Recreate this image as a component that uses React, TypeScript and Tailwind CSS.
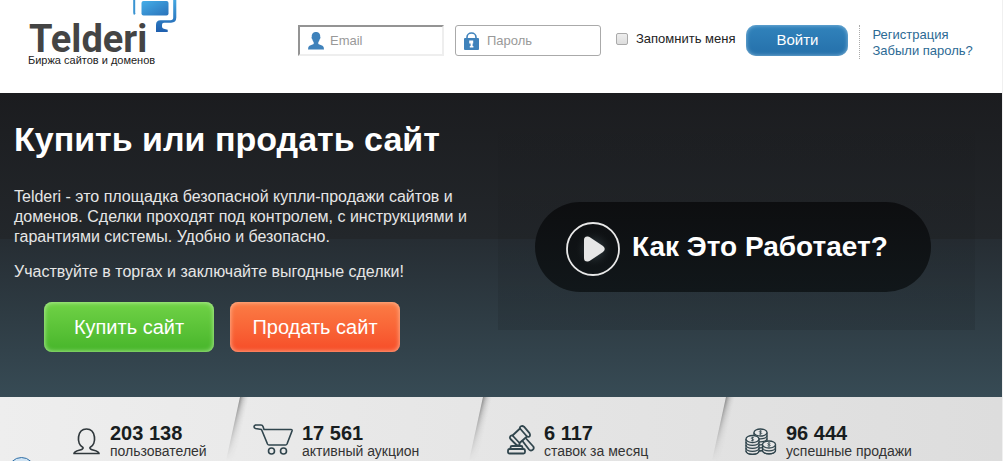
import type { ReactNode } from "react";

function LogoMark() {
  return (
    <svg width="46" height="34" viewBox="0 0 46 34" aria-hidden="true">
      <defs>
        <linearGradient id="screen" x1="0" y1="0" x2="1" y2="1">
          <stop offset="0" stopColor="#45aee8" />
          <stop offset="1" stopColor="#2a72ba" />
        </linearGradient>
        <linearGradient id="frame" gradientUnits="userSpaceOnUse" x1="0" y1="0" x2="0" y2="32">
          <stop offset="0" stopColor="#43a6e0" />
          <stop offset="1" stopColor="#1f5fae" />
        </linearGradient>
      </defs>
      <path d="M2.200 0v12.500q0 1 .6 1.800" fill="none" stroke="#3a94d2" strokeWidth="2" />
      <rect x="9.500" y="1" width="27" height="14.500" rx="2" fill="url(#screen)" />
      <path d="M41.200 0h3.100v17.500q0 5.200-5.300 5.200h-7q-2 0-2 2v1.800q0 1.800 1.800 2.300l3.900.9v2.200H24v-7q0-4.600 4.600-4.600h9.900q2.700 0 2.700-2.800z" fill="url(#frame)" />
    </svg>
  );
}

function UserGlyph() {
  return (
    <svg width="16" height="18" viewBox="0 0 16 18" fill="#3f82bb" aria-hidden="true" className="shrink-0">
      <path d="M8 0C4.800 0 3.600 2.200 3.800 4.800 3.200 5.200 3.700 7 4.300 7.300 4.600 8.900 5.300 9.700 5.700 10.200V12L1.500 13.800Q0 14.500 0 17.500H16Q16 14.500 14.500 13.800L10.300 12V10.200C10.700 9.700 11.400 8.900 11.700 7.300 12.300 7 12.800 5.200 12.200 4.800 12.400 2.200 11.200 0 8 0z" />
    </svg>
  );
}

function LockGlyph() {
  return (
    <svg width="15" height="18" viewBox="0 0 15 18" aria-hidden="true" className="shrink-0">
      <path d="M3 7V5.200a4.500 4.200 0 0 1 9 0V7" fill="none" stroke="#3f82bb" strokeWidth="1.600" />
      <rect y="6" width="15" height="12" rx="1" fill="#3f82bb" />
      <path d="M5.200 8.500h4v3h-.6V14h.8v1.500H5.800V14h.8v-2.500H5.200z" fill="#fff" />
    </svg>
  );
}

function PersonIcon() {
  return (
    <svg width="27" height="27" viewBox="0 0 27 27" fill="none" stroke="#30383c" strokeWidth="1.700" aria-hidden="true">
      <path d="M10 19.500C3 16 4 1 13.500 1S24 16 17 19.500c-1 3.500 8.500 2 9 6H1C1.500 21.500 11 23 10 19.500z" strokeLinejoin="round" />
    </svg>
  );
}

function CartIcon() {
  return (
    <svg width="41" height="31" viewBox="0 0 41 31" fill="none" stroke="#30454d" strokeWidth="1.600" strokeLinejoin="round" aria-hidden="true">
      <path d="M11 5.500h27q1.500 0 1 1.500l-5 13q-.5 1-1.500 1H16q-1 0-1.500-1L8.500 5.500 2.500 4.500Q1 4 1 2.800T2.500 1H8q1.500 0 2 1.500L11 5.500z" />
      <circle cx="18.500" cy="27" r="3" />
      <circle cx="30.500" cy="27" r="3" />
    </svg>
  );
}

function GavelIcon() {
  return (
    <svg width="28" height="30" viewBox="0 0 28 30" fill="none" stroke="#30454d" strokeWidth="1.800" strokeLinejoin="round" strokeLinecap="round" aria-hidden="true">
      <path d="M5.500 10.500 13 3.500l7 8-7.500 6.500z" />
      <path d="M13 3.500q-.5-1.500 1-2.200t3 .4l5.500 6.500q1 1.800.2 3t-2.700.3" />
      <path d="M5.500 10.500Q4 10 3.200 11.500T3.500 14l5.500 5.500q1.500 1.500 2.800.8t.7-2.300" />
      <path d="m15.500 16 6.500 8.500q1.500 1.800 3.500.5t.8-3.500L19.500 14" />
      <path d="M3.500 24v-1.500Q3.500 21 5 21h9q1.500 0 1.500 1.500V24M2.500 24h14q1.500 0 1.500 2v1q0 1.500-1.500 1.500h-14Q1 28.500 1 27v-1q0-2 1.500-2z" />
    </svg>
  );
}

function CoinStack({ x, y, layers }: { x: number; y: number; layers: number }) {
  const h = layers * 3;
  return (
    <g transform={`translate(${x} ${y})`}>
      <path d={`M-6.500 0V${h}A6.500 3.300 0 0 0 6.500 ${h}V0`} fill="#e0e0e0" />
      {Array.from({ length: layers }, (_, i) => (
        <path key={i} d={`M-6.500 ${(i + 1) * 3}a6.500 3.300 0 0 0 13 0`} />
      ))}
      <ellipse rx="6.500" ry="3.500" fill="#e8e8e8" />
      <path d="M1.400-1.200C.5-2-1.500-1.700-1.300-.7S1.500 0 1.300.9-.8 1.900-1.500 1.200M0-2.200V2.200" strokeWidth=".8" />
    </g>
  );
}

function CoinsIcon() {
  return (
    <svg width="32" height="27" viewBox="0 0 32 27" fill="none" stroke="#30454d" strokeWidth="1.300" aria-hidden="true">
      <CoinStack x={15.5} y={4.500} layers={5} />
      <CoinStack x={7.5} y={11} layers={4} />
      <CoinStack x={24} y={16.500} layers={2} />
    </svg>
  );
}

function PlayIcon() {
  return (
    <svg width="54" height="54" viewBox="0 0 54 54" aria-hidden="true" className="mt-1 shrink-0">
      <defs>
        <radialGradient id="glow">
          <stop offset="0" stopColor="#44535a" />
          <stop offset="1" stopColor="#0d0f10" stopOpacity="0" />
        </radialGradient>
      </defs>
      <circle cx="28" cy="27" r="20" fill="url(#glow)" />
      <circle cx="27" cy="27" r="26" fill="none" stroke="#e8e8e8" strokeWidth="1.800" />
      <path d="M18 18q0-4 4-3.500 1.500.2 3 1.500l12 8q3.500 3 0 6l-12 8q-1.500 1.200-3 1.500-4 .5-4-3.500z" fill="#e6e6e6" />
    </svg>
  );
}

function Stat({ icon, value, label, pad }: { icon: ReactNode; value: string; label: string; pad: string }) {
  return (
    <div className={`flex items-start pt-6 ${pad}`}>
      <div className="flex h-[34px] items-end">{icon}</div>
      <div>
        <div className="text-xl leading-6 font-bold text-[#181d20]">{value}</div>
        <div className="text-sm leading-3 whitespace-nowrap text-[#333]">{label}</div>
      </div>
    </div>
  );
}

function Divider() {
  return (
    <svg width="24" height="64" viewBox="0 0 24 64" aria-hidden="true" className="absolute top-0 -right-2">
      <defs>
        <linearGradient id="fold" gradientUnits="userSpaceOnUse" x1="7" y1="30" x2="16" y2="32">
          <stop offset="0" stopColor="#777" stopOpacity=".9" />
          <stop offset="0.400" stopColor="#999" stopOpacity=".45" />
          <stop offset="1" stopColor="#ccc" stopOpacity="0" />
        </linearGradient>
        <linearGradient id="foldFade" x1="0" y1="0" x2="0" y2="1">
          <stop offset="0" stopColor="#fff" />
          <stop offset="1" stopColor="#000" />
        </linearGradient>
        <mask id="foldMask">
          <rect width="24" height="64" fill="url(#foldFade)" />
        </mask>
      </defs>
      <path d="M14 0h10L10 64H0z" fill="url(#fold)" mask="url(#foldMask)" />
    </svg>
  );
}

export default function App() {
  return (
    <div className="flex min-h-screen flex-col overflow-hidden border-r border-[#f0f0f0] bg-white font-['Liberation_Sans',Arial,sans-serif]">
      <header className="flex h-[93px] items-start">
        <a href="#home" className="relative block w-[298px] shrink-0 pt-6 pl-7">
          <span className="block pl-px font-[Roboto,sans-serif] text-[38px] leading-[30px] font-bold text-[#444]">Telderi</span>
          <span className="absolute top-0 left-[132px]">
            <LogoMark />
          </span>
          <span className="block text-[11px] leading-3 text-[#222]">Биржа сайтов и доменов</span>
        </a>
        <form className="flex items-start pt-[25px]" onSubmit={(e) => e.preventDefault()}>
          <label className="flex h-[31px] w-[146px] items-center gap-1.5 border-2 border-t-[#949494] border-r-[#eee] border-b-[#eee] border-l-[#949494] pl-2">
            <UserGlyph />
            <input type="email" aria-label="Email" placeholder="Email" className="w-full min-w-0 text-[13px] outline-none placeholder:text-[#999]" />
          </label>
          <label className="ml-[11px] flex h-[31px] w-[146px] items-center gap-2 rounded-[3px] border border-[#aaa] pl-2">
            <LockGlyph />
            <input type="password" aria-label="Пароль" placeholder="Пароль" className="w-full min-w-0 text-[13px] outline-none placeholder:text-[#999]" />
          </label>
          <label className="mt-1.5 ml-[15px] flex items-center gap-2 text-[13px] leading-4 whitespace-nowrap text-[#222]">
            <input type="checkbox" className="size-3 appearance-none rounded-[2px] border border-[#aaa] bg-linear-to-b from-[#eee] to-[#ddd] checked:bg-[#2f82c8]" />
            Запомнить меня
          </label>
          <button type="submit" className="ml-[11px] h-[31px] w-[102px] rounded-[10px] bg-linear-to-b from-[#3183bc] to-[#2570aa] text-[15px] text-white shadow-[inset_0_0_4px_#8fc0e0]">
            Войти
          </button>
        </form>
        <nav className="mt-[25px] ml-[11px] flex h-[34px] flex-col border-l border-dotted border-[#aaa] pt-0.5 pl-3 text-[13px] leading-4 whitespace-nowrap text-[#2c6a94]">
          <a href="#register">Регистрация</a>
          <a href="#restore">Забыли пароль?</a>
        </nav>
      </header>

      <main className="flex h-[304px] items-start justify-between bg-[linear-gradient(to_bottom,#1b1c1f_0%,#23272b_48%,#262d33_48%,#374b55_100%)] pl-3.5">
        <section className="w-[470px] text-base leading-5 text-[#e6e6e6]">
          <h1 className="pt-[26px] text-[34px] leading-10 font-bold whitespace-nowrap text-white">Купить или продать сайт</h1>
          <p className="mt-7">
            Telderi - это площадка безопасной купли-продажи сайтов и доменов. Сделки проходят под контролем, с инструкциями и гарантиями системы. Удобно и безопасно.
          </p>
          <p className="mt-[15px]">Участвуйте в торгах и заключайте выгодные сделки!</p>
          <div className="mt-5 ml-[30px] flex gap-4 text-xl text-white">
            <button type="button" className="h-[50px] w-[170px] rounded-lg bg-linear-to-b from-[#70d246] to-[#46b52a] shadow-[inset_0_0_5px_#c0f0a8]">
              Купить сайт
            </button>
            <button type="button" className="h-[50px] w-[170px] rounded-lg bg-linear-to-b from-[#fb7c45] to-[#f64c28] shadow-[inset_0_0_5px_#ffc4a4]">
              Продать сайт
            </button>
          </div>
        </section>
        <div className="mr-[27px] h-[237px] w-[477px] bg-linear-to-b from-black/0 to-black/10 pt-[109px] pl-[37px]">
          <button type="button" className="flex h-[90px] w-[396px] items-center gap-3 rounded-full bg-linear-to-b from-[#0d0e10] to-[#11171a] pl-[31px] text-[28px] font-bold whitespace-nowrap text-white">
            <PlayIcon />
            Как Это Работает?
          </button>
        </div>
      </main>

      <footer className="grid h-16 grow grid-cols-[242fr_243fr_243fr_274fr] overflow-hidden bg-linear-to-r from-[#eeeeee] to-[#dddddd]">
        <div className="relative">
          <Stat icon={<PersonIcon />} value="203 138" label="пользователей" pad="pl-[73px] gap-2.5" />
          <Divider />
        </div>
        <div className="relative">
          <Stat icon={<CartIcon />} value="17 561" label="активный аукцион" pad="pl-[11px] gap-2" />
          <Divider />
        </div>
        <div className="relative">
          <Stat icon={<GavelIcon />} value="6 117" label="ставок за месяц" pad="pl-[22px] gap-[9px]" />
          <Divider />
        </div>
        <Stat icon={<CoinsIcon />} value="96 444" label="успешные продажи" pad="pl-[17px] gap-[9px]" />
      </footer>
      <button type="button" aria-label="Помощь" className="fixed -bottom-[23px] left-2 size-[27px] rounded-full border border-[#2f6ea5] bg-[#cfe3f3]" />
    </div>
  );
}
